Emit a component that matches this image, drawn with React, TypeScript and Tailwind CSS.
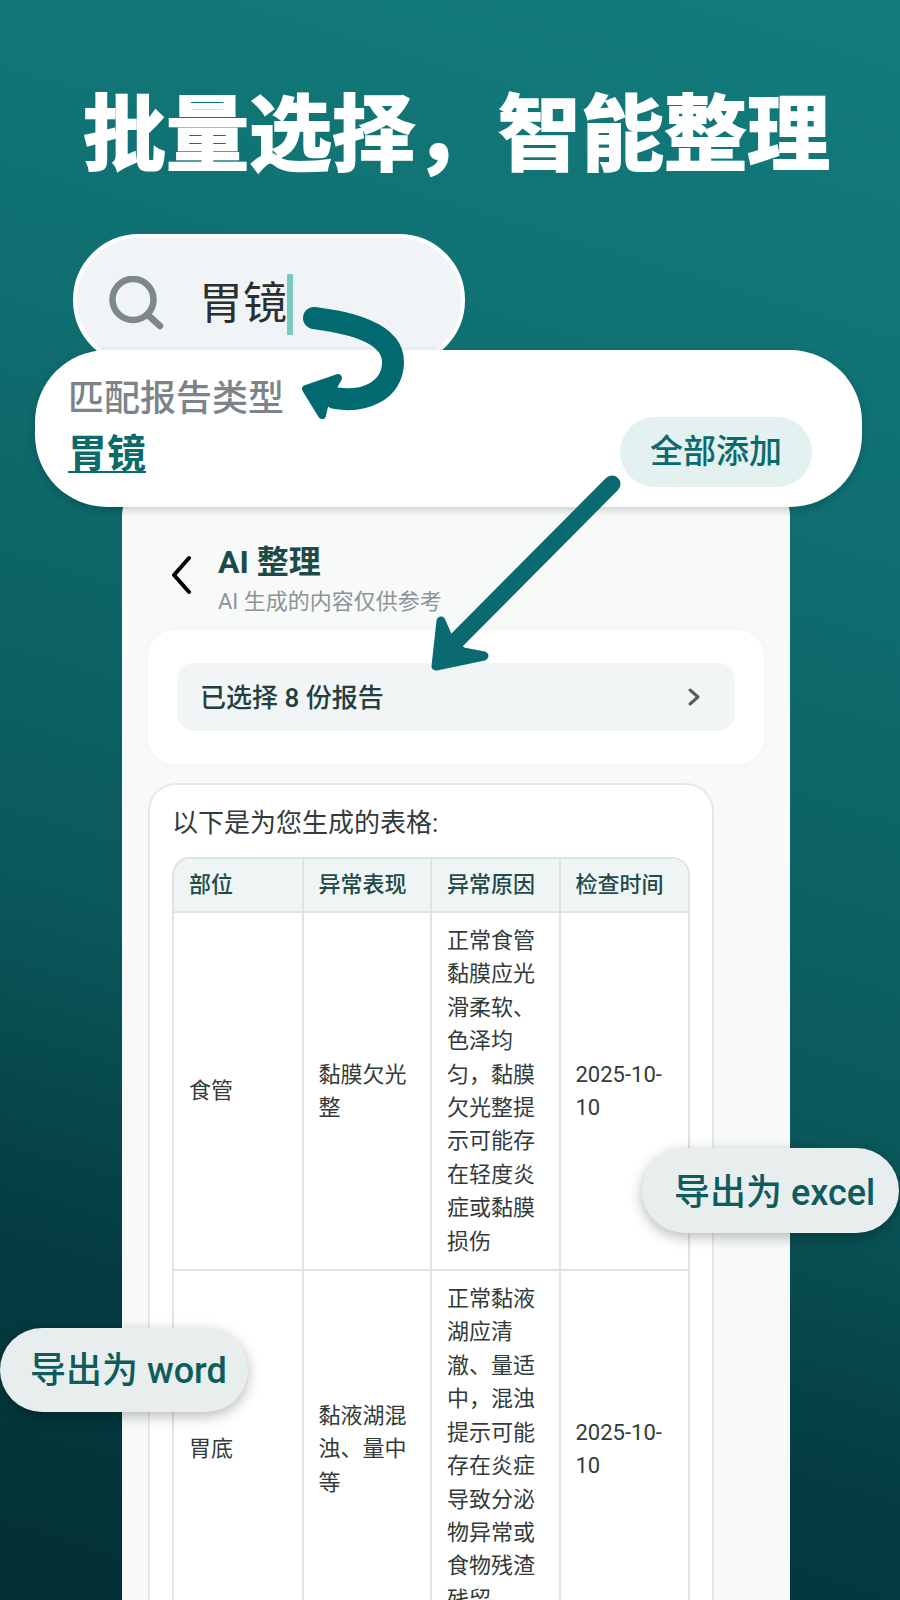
const rows = [
  {
    part: '食管',
    sign: '黏膜欠光整',
    cause: '正常食管黏膜应光滑柔软、色泽均匀，黏膜欠光整提示可能存在轻度炎症或黏膜损伤',
    date: '2025-10-10',
  },
  {
    part: '胃底',
    sign: '黏液湖混浊、量中等',
    cause: '正常黏液湖应清澈、量适中，混浊提示可能存在炎症导致分泌物异常或食物残渣残留',
    date: '2025-10-10',
  },
]

const headers = ['部位', '异常表现', '异常原因', '检查时间']

export default function App() {
  return (
    <div className="relative w-[900px] h-[1600px] overflow-hidden flex flex-col bg-[linear-gradient(197deg,#137c7c_0%,#0f6e70_30%,#0b5a5c_60%,#043c42_80%,#032f35_100%)] [font-family:Roboto,'Noto_Sans_CJK_SC',sans-serif]">

      {/* Title */}
      <h1 className="mt-[90px] h-[92px] pl-[83px] text-[83px] leading-[92px] font-bold text-white whitespace-nowrap [-webkit-text-stroke:2px_white]">
        批量选择，智能整理
      </h1>

      {/* Search pill */}
      <div className="mt-[52px] ml-[73px] w-[392px] h-[132px] shrink-0 rounded-[66px] border-4 border-white bg-[#f0f4f6] flex items-center pl-[32px] pt-[8px]">
        <svg width="56" height="56" viewBox="0 0 56 56" fill="none" stroke="#7d8888" strokeWidth="6.5" strokeLinecap="round">
          <circle cx="24" cy="23.5" r="20.5" />
          <line x1="39" y1="39" x2="51" y2="50" />
        </svg>
        <span className="ml-[34px] text-[44px] leading-[60px] text-[#2a2f30]">胃镜</span>
        <span className="w-[6px] h-[61px] bg-[#7ccabf]" />
      </div>

      {/* Matched report type */}
      <div className="relative z-10 -mt-[16px] ml-[35px] w-[827px] h-[157px] shrink-0 rounded-[72px] bg-white shadow-[0_3px_8px_rgba(0,0,0,0.18)] flex items-start justify-between pl-[33px] pr-[50px]">
        <div className="pt-[26px]">
          <div className="text-[36px] leading-[46px] font-medium text-[#7c8489]">匹配报告类型</div>
          <div className="mt-[10px] text-[39px] leading-[44px] font-bold text-[#0c6a6a] underline underline-offset-[4px] decoration-2">胃镜</div>
        </div>
        <div className="mt-[67px] w-[192px] h-[70px] rounded-[35px] bg-[#e3f1f1] flex items-center justify-center text-[33px] font-medium text-[#0b6a6c]">
          全部添加
        </div>
      </div>

      {/* App panel */}
      <div className="-mt-[20px] ml-[122px] w-[668px] flex-1 rounded-t-[28px] bg-[#f8faf9] pt-[55px]">
        <div className="flex items-start pl-[50px]">
          <svg className="mt-[13px]" width="20" height="40" viewBox="0 0 20 40" fill="none" stroke="#000" strokeWidth="4" strokeLinecap="round" strokeLinejoin="round">
            <path d="M17 3 L2 20 L17 37" />
          </svg>
          <div className="ml-[26px]">
            <div className="text-[32px] leading-[40px] font-bold text-[#1c4a48]">AI 整理</div>
            <div className="mt-[6px] text-[22px] leading-[28px] text-[#8b9496]">AI 生成的内容仅供参考</div>
          </div>
        </div>

        <div className="mt-[14px] ml-[26px] w-[616px] h-[134px] rounded-[26px] bg-white px-[29px] py-[33px] shadow-[0_0_8px_rgba(0,0,0,0.03)]">
          <div className="h-[68px] rounded-[17px] bg-[#f1f5f6] flex items-center justify-between pl-[23px] pr-[34px]">
            <span className="pt-[3px] text-[26px] font-medium text-[#243f3e]">已选择 8 份报告</span>
            <svg width="14" height="20" viewBox="0 0 14 20" fill="none" stroke="#555e5e" strokeWidth="3" strokeLinecap="round" strokeLinejoin="round">
              <path d="M3 3 L11 10 L3 17" />
            </svg>
          </div>
        </div>

        {/* Chat bubble with the table */}
        <div className="mt-[19px] ml-[26px] w-[566px] rounded-t-[28px] border-2 border-b-0 border-[#e3e9e9] bg-white px-[22px] pt-[21px]">
          <p className="text-[26px] leading-[34px] text-[#333a3a]">以下是为您生成的表格:</p>
          <div className="mt-[17px] rounded-t-[18px] border-2 border-b-0 border-[#dbe5e6] overflow-hidden">
            <table className="w-full table-fixed border-collapse text-[22px] leading-[33.4px]">
              <thead>
                <tr className="h-[53px] bg-[#eff5f5] text-[#234a48]">
                  {headers.map((h, i) => (
                    <th key={h} className={`px-[15px] text-left font-medium ${i > 0 ? 'border-l-2 border-[#dbe5e6]' : ''}`}>{h}</th>
                  ))}
                </tr>
              </thead>
              <tbody className="text-[#333a3a]">
                {rows.map((r) => (
                  <tr key={r.part} className="border-t-2 border-[#dbe5e6]">
                    <td className="px-[15px] py-[11px] align-middle">{r.part}</td>
                    <td className="px-[15px] py-[11px] align-middle border-l-2 border-[#dbe5e6]">{r.sign}</td>
                    <td className="px-[15px] py-[11px] align-middle border-l-2 border-[#dbe5e6]">{r.cause}</td>
                    <td className="px-[15px] py-[11px] align-middle border-l-2 border-[#dbe5e6]">{r.date}</td>
                  </tr>
                ))}
              </tbody>
            </table>
          </div>
        </div>
      </div>

      {/* Arrows */}
      <svg className="absolute left-0 top-0 z-20 pointer-events-none" width="900" height="1600" viewBox="0 0 900 1600" fill="none">
        <path d="M314 318 C345 322 393 331 393 362 C393 392 362 403 335 398" stroke="#016a70" strokeWidth="22" strokeLinecap="round" />
        <polygon points="306,389 338,378 330,392 345,398 325,402 322,415" fill="#016a70" stroke="#016a70" strokeWidth="8" strokeLinejoin="round" />
        <line x1="612" y1="484" x2="452" y2="645" stroke="#0b6a70" strokeWidth="17" strokeLinecap="round" />
        <polygon points="436,666 441,621 450,642 463,652 484,656" fill="#0b6a70" stroke="#0b6a70" strokeWidth="9" strokeLinejoin="round" />
      </svg>

      {/* Export pills */}
      <div className="absolute z-30 left-[642px] top-[1148px] w-[257px] h-[85px] rounded-[43px] bg-[#e8eeee] shadow-[0_4px_14px_rgba(0,0,0,0.28)] flex items-center pl-[32px] pt-[4px] text-[36px] font-medium text-[#0f5c5c] whitespace-nowrap">
        导出为 excel
      </div>
      <div className="absolute z-30 left-0 top-[1328px] w-[248px] h-[84px] rounded-[42px] bg-[#e8eeee] shadow-[0_4px_14px_rgba(0,0,0,0.28)] flex items-center pl-[30px] pt-[1px] text-[36px] font-medium text-[#0f5c5c] whitespace-nowrap">
        导出为 word
      </div>
    </div>
  )
}
